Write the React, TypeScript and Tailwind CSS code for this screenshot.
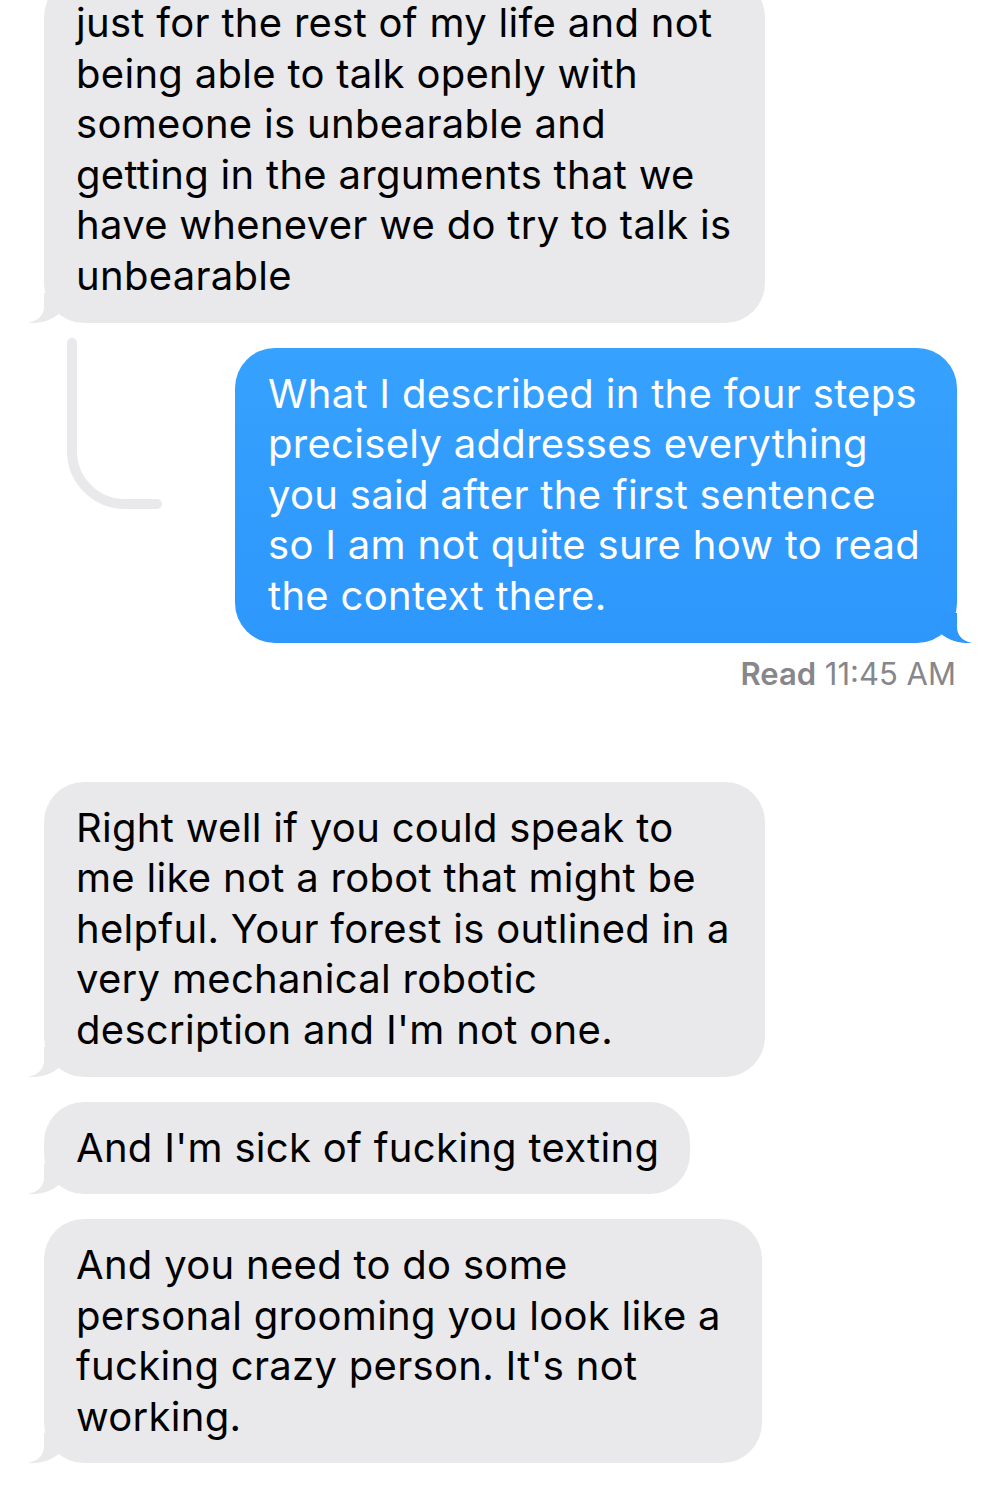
import React from "react";

const FONT = { fontFamily: '"Inter", "Noto Sans", "Liberation Sans", sans-serif' };

function GrayTail() {
  return (
    <svg
      className="absolute bottom-0 left-[-16px]"
      width="34"
      height="30"
      viewBox="0 0 34 30"
    >
      <path
        d="M16 0 L16 14 C16 22 10 28 0 30 C10 31 22 28 31 21 L31 0 Z"
        fill="#e9e9eb"
      />
    </svg>
  );
}

function BlueTail() {
  return (
    <svg
      className="absolute bottom-0 right-[-15px] scale-x-[-1]"
      width="34"
      height="30"
      viewBox="0 0 34 30"
    >
      <path
        d="M15 0 L15 14 C15 22 10 28 0 30 C10 31 22 28 31 21 L31 0 Z"
        fill="#2d97fc"
      />
    </svg>
  );
}

function Gray({ lines, w, className = "" }: { lines: string[]; w: string; className?: string }) {
  return (
    <div className={`relative ml-[44px] ${w} ${className}`}>
      <div className="relative rounded-[40px] bg-[#e9e9eb] px-[32px] py-[21px] text-[40px] leading-[50.6px] text-black tracking-[0.3px]">
        {lines.map((l, i) => (
          <div key={i} className="whitespace-nowrap">{l}</div>
        ))}
      </div>
      <GrayTail />
    </div>
  );
}

export default function App() {
  return (
    <div className="relative h-[1487px] w-[1000px] overflow-hidden bg-white" style={FONT}>
      <div className="flex flex-col">
        <Gray
          className="mt-[-23px]"
          w="w-[721px]"
          lines={[
            "just for the rest of my life and not",
            "being able to talk openly with",
            "someone is unbearable and",
            "getting in the arguments that we",
            "have whenever we do try to talk is",
            "unbearable",
          ]}
        />

        <div className="relative mt-[25px] flex justify-end pr-[43px]">
          <svg className="absolute left-0 top-[-10px]" width="200" height="200" viewBox="0 337 200 200">
            <path
              d="M72 342 L72 450 A53 53 0 0 0 125 503 L157 503"
              fill="none"
              stroke="#e9e9eb"
              strokeWidth="10"
              strokeLinecap="round"
            />
          </svg>
          <div className="relative w-[722px]">
            <div className="rounded-[40px] bg-gradient-to-b from-[#37a1fe] to-[#2d97fc] px-[33px] py-[21px] text-[40px] leading-[50.6px] text-white tracking-[0.3px]">
              {[
                "What I described in the four steps",
                "precisely addresses everything",
                "you said after the first sentence",
                "so I am not quite sure how to read",
                "the context there.",
              ].map((l, i) => (
                <div key={i} className="whitespace-nowrap">{l}</div>
              ))}
            </div>
            <BlueTail />
          </div>
        </div>

        <div className="mt-[14px] pr-[44px] text-right text-[31px] leading-[34px] text-[#86868b]">
          <span className="font-semibold">Read</span> 11:45 AM
        </div>

        <Gray
          className="mt-[91px]"
          w="w-[721px]"
          lines={[
            "Right well if you could speak to",
            "me like not a robot that might be",
            "helpful. Your forest is outlined in a",
            "very mechanical robotic",
            "description and I'm not one.",
          ]}
        />
        <Gray className="mt-[25px]" w="w-[646px]" lines={["And I'm sick of fucking texting"]} />
        <Gray
          className="mt-[25px]"
          w="w-[718px]"
          lines={[
            "And you need to do some",
            "personal grooming you look like a",
            "fucking crazy person. It's not",
            "working.",
          ]}
        />
      </div>
    </div>
  );
}
